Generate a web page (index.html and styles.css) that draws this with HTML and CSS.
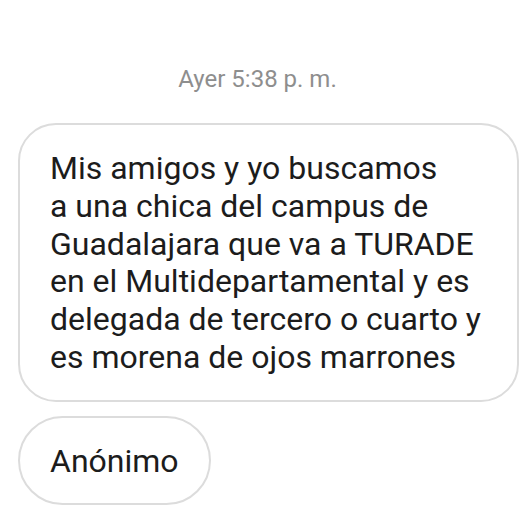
FILE: index.html
```html
<!DOCTYPE html>
<html lang="es">
<head>
<meta charset="utf-8">
<link rel="stylesheet" href="styles.css">
</head>
<body>
<div class="thread">
  <div class="stamp">Ayer 5:38 p.&nbsp;m.</div>
  <div class="bubble main">Mis amigos y yo buscamos<br>a una chica del campus de<br>Guadalajara que va a TURADE<br>en el Multidepartamental y es<br>delegada de tercero o cuarto y<br>es morena de ojos marrones</div>
  <div class="bubble small">Anónimo</div>
</div>
</body>
</html>
```
FILE: styles.css
```css
html, body {
  margin: 0;
  padding: 0;
  background: #ffffff;
}
.thread {
  width: 531px;
  height: 531px;
  box-sizing: border-box;
  padding: 64px 0 0 18px;
  display: flex;
  flex-direction: column;
  align-items: flex-start;
  font-family: Roboto, "Noto Sans", sans-serif;
  color: #1c1c1c;
}
.stamp {
  align-self: stretch;
  padding-right: 34px;
  text-align: center;
  font-size: 24px;
  line-height: 30px;
  color: #8e8e8e;
}
.bubble {
  box-sizing: border-box;
  border: 2px solid #dcdcdc;
  font-size: 32px;
  line-height: 37.8px;
  padding-left: 30px;
}
.main {
  margin-top: 29px;
  width: 501px;
  height: 279px;
  border-radius: 38px;
  padding-top: 25px;
}
.small {
  margin-top: 14px;
  width: 193px;
  height: 89px;
  border-radius: 45px;
  padding-top: 25px;
}
```
